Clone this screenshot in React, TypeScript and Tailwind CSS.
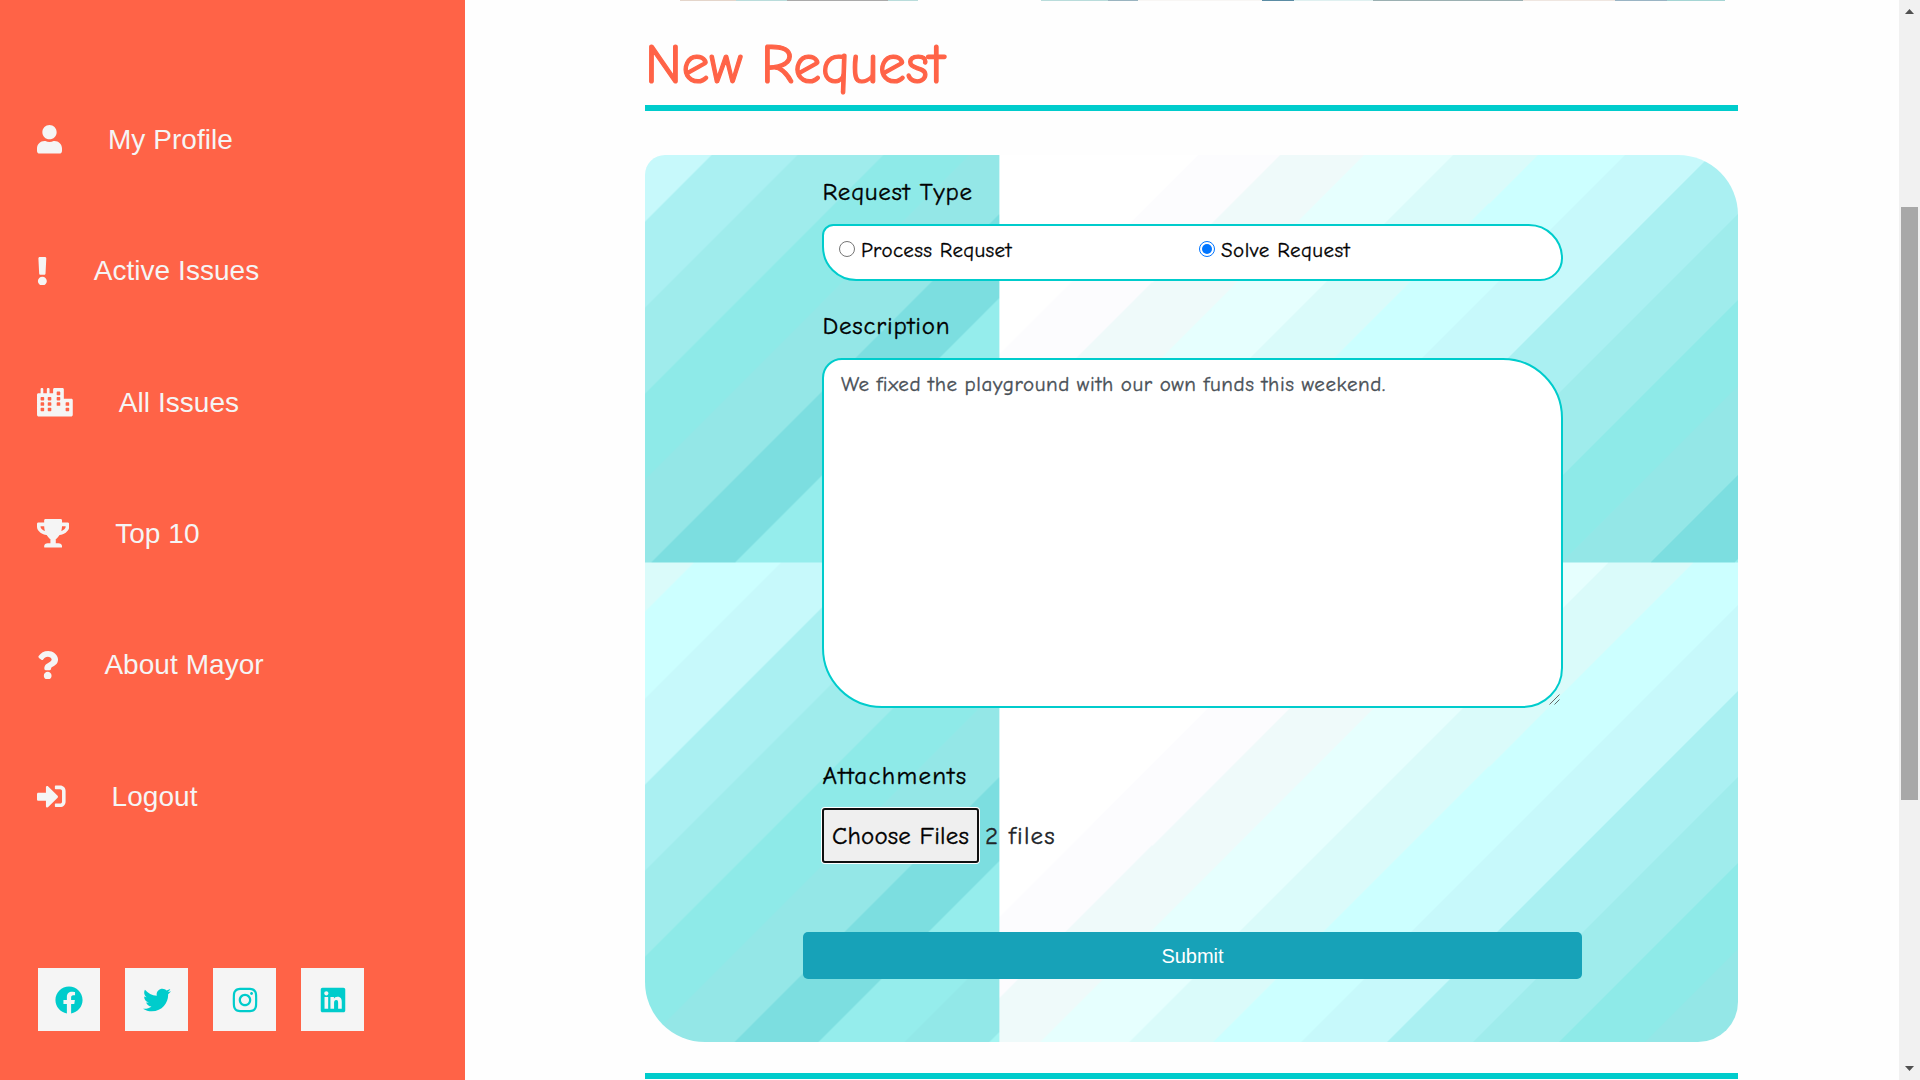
import type { ReactNode } from "react";
import {
  FaCity,
  FaExclamation,
  FaFacebook,
  FaInstagram,
  FaLinkedin,
  FaQuestion,
  FaSignInAlt,
  FaTrophy,
  FaTwitter,
  FaUser,
} from "react-icons/fa";

const comic = "font-['Comic_Sans_MS','Comic_Neue',Lato,sans-serif] [font-variant-ligatures:none]";

const navItems = [
  { label: "My Profile", icon: <FaUser className="h-[28.6px] w-[25px]" /> },
  { label: "Active Issues", icon: <FaExclamation className="h-[28.6px] w-[10.7px]" /> },
  { label: "All Issues", icon: <FaCity className="h-[28.6px] w-[35.8px]" /> },
  { label: "Top 10", icon: <FaTrophy className="h-[28.6px] w-[32.2px]" /> },
  { label: "About Mayor", icon: <FaQuestion className="h-[28.6px] w-[21.4px]" /> },
  { label: "Logout", icon: <FaSignInAlt className="h-[28.6px] w-[28.6px]" /> },
];

const socials = [
  { name: "Facebook", icon: <FaFacebook className="size-7" /> },
  { name: "Twitter", icon: <FaTwitter className="size-7" /> },
  { name: "Instagram", icon: <FaInstagram className="size-7" /> },
  { name: "LinkedIn", icon: <FaLinkedin className="size-7" /> },
];

function Sidebar() {
  return (
    <aside className="flex h-full w-[465px] shrink-0 flex-col bg-[#ff6347] pt-[74px] text-[#f5f5f5]">
      <nav className="flex flex-col">
        {navItems.map((item) => (
          <a key={item.label} className="flex h-[131.3px] items-center gap-[46px] pl-[37px] text-[28px]">
            {item.icon}
            <span className="whitespace-nowrap pt-px tracking-[0.05px]">{item.label}</span>
          </a>
        ))}
      </nav>
      <div className="mt-[106px] flex gap-[25px] pl-[37.6px]">
        {socials.map((s) => (
          <a key={s.name} aria-label={s.name} className="flex h-[63px] w-[62.9px] items-center justify-center bg-[#f5f5f5] pt-[2px] text-[#00cccc]">
            {s.icon}
          </a>
        ))}
      </div>
    </aside>
  );
}

function Label({ children, className }: { children: ReactNode; className: string }) {
  return (
    <div className={`h-9 whitespace-nowrap pl-[0.5px] text-[25px] leading-9 text-black [-webkit-text-stroke:0.35px] ${className}`}>
      {children}
    </div>
  );
}

function Radio({ checked, children, className }: { checked?: boolean; children: ReactNode; className: string }) {
  return (
    <label className={`flex h-[30px] items-center gap-[6px] whitespace-nowrap text-[21px] text-black ${className}`}>
      <span
        className={`flex size-4 shrink-0 items-center justify-center rounded-full border bg-white ${
          checked ? "border-[#0075ff]" : "border-[#767676]"
        }`}
      >
        {checked && <span className="size-[10px] rounded-full bg-[#0075ff]" />}
      </span>
      <span className="pt-[3px] [-webkit-text-stroke:0.3px]">{children}</span>
    </label>
  );
}

function RequestForm() {
  return (
    <form className="mt-[44px] flex h-[887px] w-full flex-col rounded-[20px_60px_40px_60px] bg-[linear-gradient(135deg,#ffffff_22.7%,#fcfcfe_22.7%,#fcfcfe_27.9%,#effafa_27.9%,#effafa_33.3%,#e6fffe_33.3%,#e6fffe_39%,#dafbfa_39%,#dafbfa_44.4%,#ccffff_44.4%,#ccffff_50%,#c7f9fb_50%,#c7f9fb_55.5%,#aaf0f2_55.5%,#aaf0f2_61%,#9fecec_61%,#9fecec_66.5%,#8eeae8_66.5%,#8eeae8_72%,#94e7e7_72%,#94e7e7_77.7%,#7cdee0_77.7%,#7cdee0_83.1%,#95edec_83.1%,#95edec_88.6%,#92e8e8_88.6%,#92e8e8_94%,#a4f5f2_94%)] bg-[length:999.4px_563px] bg-[position:-645px_-155.5px] px-[177px]">
      <Label className="mt-[19px] tracking-[0.75px]">Request Type</Label>
      <div className="mt-[14px] flex h-[57px] w-[741px] shrink-0 rounded-[20px_60px_40px_60px] border-2 border-[#00cccc] bg-white pl-[15px] pt-[8px]">
        <Radio className="w-[360px] tracking-[0.35px]">Process Requset</Radio>
        <Radio checked className="tracking-[0.5px]">Solve Request</Radio>
      </div>
      <Label className="mt-[27px] tracking-[0.8px]">Description</Label>
      <div className="relative mt-[14px] h-[350px] w-[741px] shrink-0 rounded-[20px_60px_40px_60px] border-2 border-[#00cccc] bg-white px-4 pt-[9px] text-[21px] leading-[30px] text-[#495057]">
        <p className="whitespace-nowrap pl-px tracking-[0.6px] [word-spacing:-0.7px] [-webkit-text-stroke:0.35px]">
          We fixed the playground with our own funds this weekend.
        </p>
        <svg className="absolute bottom-[1px] right-[1px]" width="11" height="11" viewBox="0 0 11 11" stroke="#444" strokeWidth="0.8" fill="none">
          <path d="M0.5 10.5L10.5 0.5M5.5 10.5L10.5 5.5" />
        </svg>
      </div>
      <Label className="mt-[50px] tracking-[1.25px]">Attachments</Label>
      <div className="mt-[14px] flex h-[55px] items-center gap-[6px] whitespace-nowrap text-[25px] text-[#212529] [-webkit-text-stroke:0.35px]">
        <button type="button" className="h-[55px] w-[157px] rounded-[3px] border-2 border-[#101010] bg-[#efefef] pt-px tracking-[0.2px] text-black shadow-[0_0_0_1px_white]">
          Choose Files
        </button>
        <span className="pt-px tracking-[1.2px]">2 files</span>
      </div>
      <button type="button" className="-ml-[19px] mt-[69px] h-[47px] w-[779px] rounded-[5px] bg-[#17a2b8] font-['Liberation_Sans',Arial,sans-serif] text-xl text-white">
        Submit
      </button>
    </form>
  );
}

function ScrollBar() {
  return (
    <div className="flex h-full w-[21px] shrink-0 flex-col items-center bg-[#f1f1f1]">
      <svg className="mt-2 shrink-0" width="9" height="6" viewBox="0 0 9 6" fill="#505050">
        <path d="M0 6L4.5 1L9 6Z" />
      </svg>
      <div className="mt-[193px] h-[593px] w-[17px] bg-[#a8a8a8]" />
      <svg className="mb-2 mt-auto shrink-0" width="9" height="6" viewBox="0 0 9 6" fill="#505050">
        <path d="M0 0L4.5 5L9 0Z" />
      </svg>
    </div>
  );
}

export default function App() {
  return (
    <div className="flex h-[1080px] w-[1920px] overflow-hidden bg-[#fefefe] font-['Liberation_Sans',Arial,sans-serif]">
      <Sidebar />
      <main className={`flex min-w-0 flex-1 flex-col pl-[180px] pr-[161px] ${comic}`}>
        <div className="ml-[35px] h-px w-[1045px] shrink-0 bg-[linear-gradient(90deg,#e4d5ca_0_56px,#b9dcdb_56px_107px,#aaa_107px_208px,#b9dcdb_208px_238px,#fefefe_238px_361px,#b9dcdb_361px_428px,#9ab4c0_428px_458px,#f8f6f4_458px_582px,#5b8ca4_582px_614px,#dff0f0_614px_693px,#9bb0b2_693px_843px,#efe6e0_843px_935px,#9ab4c4_935px_987px,#a5d5d4_987px)]" />
        <h1 className="h-[104px] whitespace-nowrap pt-[26px] text-[56px] leading-[76px] tracking-[-0.3px] text-[#ff6347] [-webkit-text-stroke:1.2px]">New Request</h1>
        <div className="h-[6px] shrink-0 bg-[#00cccc]" />
        <RequestForm />
        <div className="mt-[31px] h-[6px] shrink-0 bg-[#00cccc]" />
      </main>
      <ScrollBar />
    </div>
  );
}
